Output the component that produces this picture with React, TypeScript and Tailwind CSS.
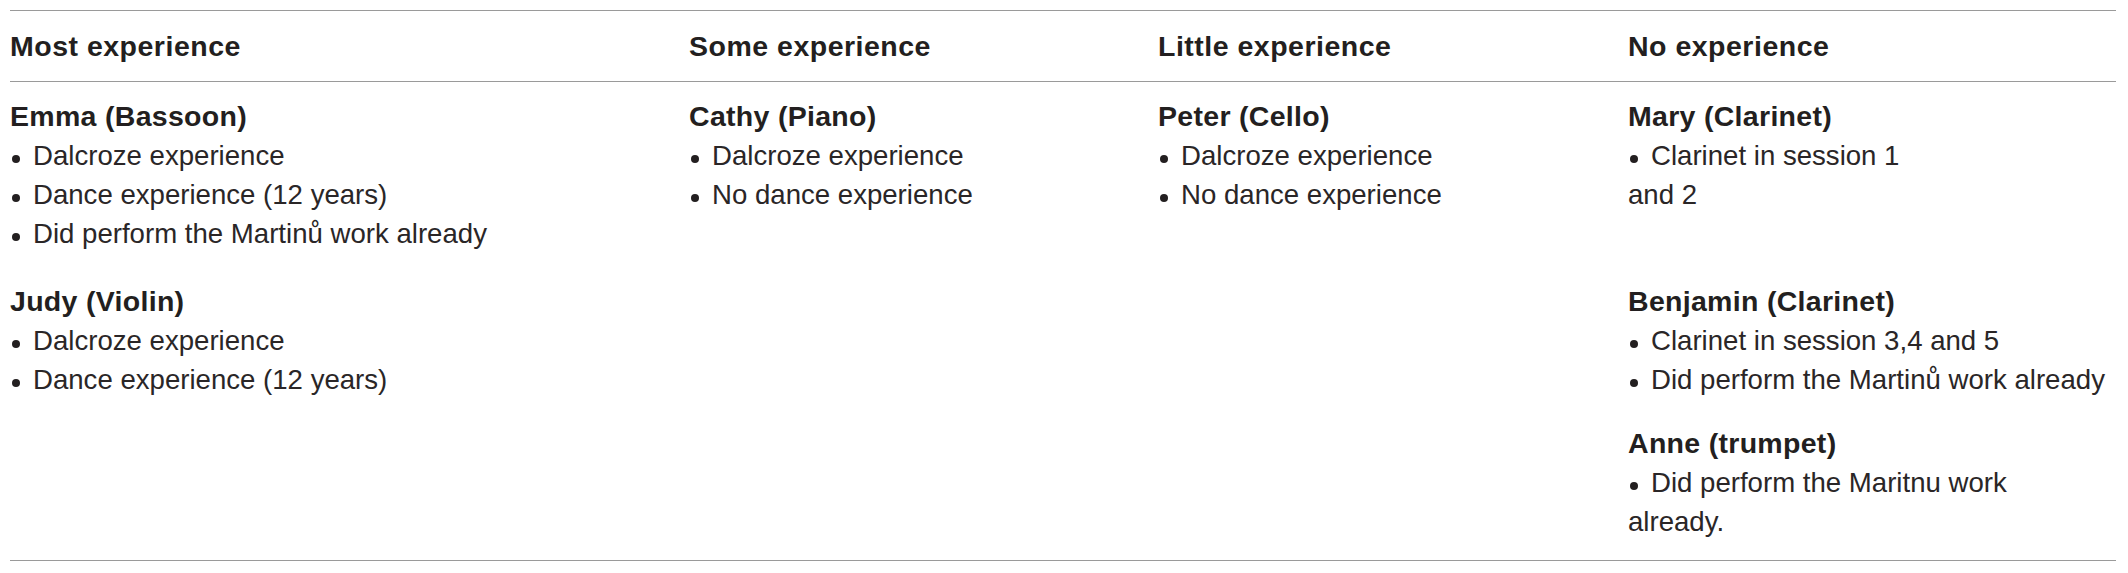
const HEADERS = ["Most experience", "Some experience", "Little experience", "No experience"];

type Entry = { name: string; lines: string[][] };

// each bullet is a list of visual lines (manual breaks as in the source table)
const ROW1: Entry[] = [
  { name: "Emma (Bassoon)", lines: [["Dalcroze experience"], ["Dance experience (12 years)"], ["Did perform the Martinů work already"]] },
  { name: "Cathy (Piano)", lines: [["Dalcroze experience"], ["No dance experience"]] },
  { name: "Peter (Cello)", lines: [["Dalcroze experience"], ["No dance experience"]] },
  { name: "Mary (Clarinet)", lines: [["Clarinet in session 1", "and 2"]] },
];

const JUDY: Entry = { name: "Judy (Violin)", lines: [["Dalcroze experience"], ["Dance experience (12 years)"]] };
const BENJAMIN: Entry = { name: "Benjamin (Clarinet)", lines: [["Clarinet in session 3,4 and 5"], ["Did perform the Martinů work already"]] };
const ANNE: Entry = { name: "Anne (trumpet)", lines: [["Did perform the Maritnu work", "already."]] };

function Person({ e }: { e: Entry }) {
  return (
    <div className="whitespace-nowrap">
      <p className="text-[28.5px] font-bold tracking-[0.3px] leading-[39px]">{e.name}</p>
      {e.lines.map((b, i) => (
        <p key={i} className="text-[27.6px] leading-[39px] text-[#2a2627]">
          <span className="inline-block w-[8px] h-[8px] rounded-full bg-[#231f20] ml-[2px] mr-[13px] align-middle relative top-[1px]" />
          {b[0]}
          {b.slice(1).map((l, j) => (
            <span key={j}>
              <br />
              {l}
            </span>
          ))}
        </p>
      ))}
    </div>
  );
}

export default function App() {
  return (
    <div className="w-[2128px] h-[573px] bg-white pt-[10px] pl-[10px] text-[#231f20] font-['Liberation_Sans',Arial,sans-serif]">
      <div className="w-[2106px] border-t border-b border-[#9a9a9a]">
        {/* header row */}
        <div className="grid grid-cols-[679px_469px_470px_1fr] h-[71px] border-b border-[#9a9a9a]">
          {HEADERS.map(h => (
            <div key={h} className="text-[28.5px] font-bold tracking-[0.5px] leading-[70px] whitespace-nowrap">{h}</div>
          ))}
        </div>

        {/* body */}
        <div className="grid grid-cols-[679px_469px_470px_1fr] gap-y-[29px] pt-[15px] pb-[19px]">
          {ROW1.map(e => (
            <Person key={e.name} e={e} />
          ))}
          <Person e={JUDY} />
          <div />
          <div />
          <div className="flex flex-col gap-[25px]">
            <Person e={BENJAMIN} />
            <Person e={ANNE} />
          </div>
        </div>
      </div>
    </div>
  );
}
